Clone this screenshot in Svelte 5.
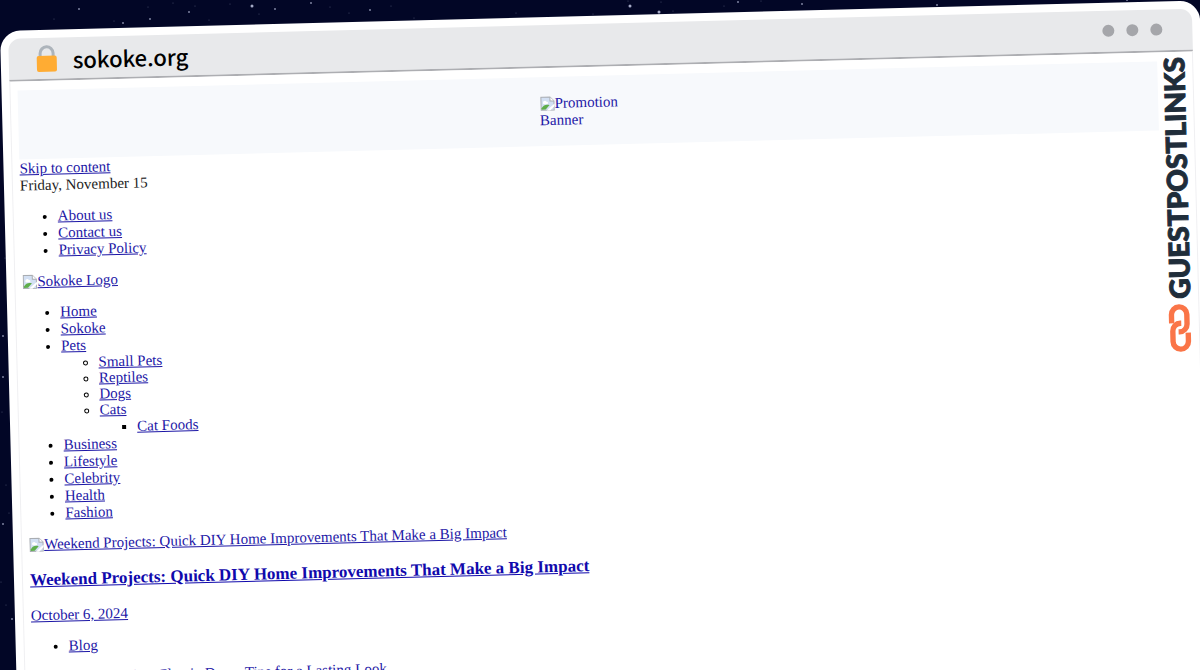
<script>
  const stars = [
    [54, 19, 1], [79, 9, 2], [114, 21, 1], [123, 23, 2], [150, 19, 2], [148, 7, 1], [173, 3, 1], [189, 12, 2],
    [195, 6, 1], [209, 20, 1], [230, 4, 1], [252, 6, 3], [259, 14, 1], [275, 9, 2], [311, 3, 2], [330, 7, 1],
    [349, 13, 1], [370, 10, 2], [391, 6, 1], [414, 18, 1], [516, 13, 1], [630, 6, 3], [593, 14, 1], [659, 12, 3],
    [628, 1, 1], [673, 11, 1], [661, 2, 1], [724, 6, 1], [738, 2, 2], [761, 1, 1], [802, 4, 2], [937, 5, 2],
    [1127, 0, 2], [5, 258, 1], [3, 336, 2], [3, 377, 2], [2, 412, 1], [6, 485, 1], [9, 513, 1], [3, 524, 2],
    [1, 582, 1], [6, 605, 1], [12, 619, 2], [1198, 60, 1]
  ];

  const pages = ['About us', 'Contact us', 'Privacy Policy'];

  const menu = [
    { label: 'Home' },
    { label: 'Sokoke' },
    {
      label: 'Pets',
      items: [
        { label: 'Small Pets' },
        { label: 'Reptiles' },
        { label: 'Dogs' },
        { label: 'Cats', items: [{ label: 'Cat Foods' }] }
      ]
    },
    { label: 'Business' },
    { label: 'Lifestyle' },
    { label: 'Celebrity' },
    { label: 'Health' },
    { label: 'Fashion' }
  ];
</script>

{#snippet missing()}
  <svg class="missing" viewBox="0 0 15 15" aria-hidden="true">
    <path d="M1 1h9l4 4v9H1z" fill="#d3e0f3" stroke="#a9adb2" />
    <path d="M10 1v4h4" fill="#fff" stroke="#a9adb2" />
    <path d="M3 6.500c0-2 3-2.500 3.500-.8C8.500 5.500 8.500 8 7 8H4C3 8 3 7 3 6.500z" fill="#fff" />
    <path d="M1.500 13.500V12c2-3.500 5-4 8-3l-4 4.500z" fill="#5fae4b" />
    <path d="M6.500 14.500l8-7v2.500l-4.500 4.500z" fill="#fff" />
  </svg>
{/snippet}

{#snippet tree(items)}
  <ul>
    {#each items as item}
      <li>
        <a href="#top">{item.label}</a>
        {#if item.items}{@render tree(item.items)}{/if}
      </li>
    {/each}
  </ul>
{/snippet}

<div class="sky">
  <svg class="stars" aria-hidden="true">
    {#each stars as [x, y, size]}
      <circle cx={x} cy={y} r={size / 2} opacity={0.2 + size * 0.18} />
    {/each}
  </svg>

  <div class="window" id="top">
    <header class="bar">
      <svg class="lock" viewBox="0 0 22 28" aria-hidden="true">
        <path d="M4.500 13V8.500a6.500 6.500 0 0 1 13 0V13" fill="none" stroke="#adb4bb" stroke-width="3" />
        <rect x="1" y="11" width="20" height="16" rx="2" fill="#ffac33" />
      </svg>
      <span class="host">sokoke.org</span>
      <span class="dots"><i></i><i></i><i></i></span>
    </header>

    <main class="page">
      <div class="banner">
        <a href="#top">{@render missing()}Promotion Banner</a>
      </div>
      <a href="#top">Skip to content</a>
      <div>Friday, November 15</div>
      <ul>
        {#each pages as label}
          <li><a href="#top">{label}</a></li>
        {/each}
      </ul>
      <a href="#top">{@render missing()}Sokoke Logo</a>
      <nav>{@render tree(menu)}</nav>
      <article>
        <a href="#top">{@render missing()}Weekend Projects: Quick DIY Home Improvements That Make a Big Impact</a>
        <h3><a href="#top">Weekend Projects: Quick DIY Home Improvements That Make a Big Impact</a></h3>
        <a href="#top">October 6, 2024</a>
        <ul><li><a href="#top">Blog</a></li></ul>
      </article>
      <article>
        <a href="#top">{@render missing()}Timeless Interior: Classic Decor Tips for a Lasting Look</a>
      </article>
    </main>

    <aside class="brand">
      <span class="name">GUESTPOSTLINKS</span>
      <svg class="chain" viewBox="0 0 24 50" aria-hidden="true">
        <g fill="none" stroke="#fa7548" stroke-width="5.600">
          <path d="M3.500 20V11a8 8 0 0 1 16 0V21a8 8 0 0 1-8 8h-1" />
          <path d="M20.500 30v9a8 8 0 0 1-16 0V28a8 8 0 0 1 8-8h1" />
        </g>
      </svg>
    </aside>
  </div>
</div>

<style>
  :global(body) {
    background: #020626;
  }

  .sky {
    position: relative;
    display: flow-root;
    box-sizing: border-box;
    height: 100vh;
    overflow: hidden;
    background: #020626;
  }

  .stars {
    position: absolute;
    top: 0;
    left: 0;
    width: 100%;
    height: 100%;
    fill: #dfe4ff;
  }

  .window {
    position: relative;
    box-sizing: border-box;
    min-height: 110vh;
    margin-top: 31px;
    padding: 8px;
    border-radius: 20px;
    background: #fff;
    transform: rotate(-1.46deg);
    transform-origin: 0 0;
  }

  .bar {
    display: flex;
    align-items: center;
    height: 41px;
    padding: 0 30px 0 27px;
    border-bottom: 2px solid #adaeb2;
    border-radius: 12px 12px 0 0;
    background: #e8e9eb;
  }

  .lock {
    width: 22px;
    height: 28px;
  }

  .host {
    margin-left: 15px;
    font: 500 22px/36px "Noto Sans CJK SC", sans-serif;
    color: #000;
  }

  .dots {
    display: flex;
    gap: 12px;
    margin-left: auto;
    padding-bottom: 2px;
  }

  .dots i {
    width: 12px;
    height: 12px;
    border-radius: 50%;
    background: #a5a6aa;
  }

  .page {
    padding: 9px 8px 8px 7px;
    border-left: 1px solid #f0f0f2;
    border-right: 1px solid #f0f0f2;
    font: 15px/17px "Liberation Serif", serif;
    color: #222;
  }

  a {
    color: #1d17a6;
  }

  .banner {
    display: flex;
    justify-content: center;
    height: 69px;
    margin-bottom: 1px;
    padding-right: 32px;
    background: #f7f9fc;
  }

  .banner a {
    width: 92px;
    margin-top: 18px;
    text-decoration: none;
  }

  .missing {
    width: 15px;
    height: 15px;
    vertical-align: -3px;
  }

  ul {
    margin: 14px 0;
    padding-left: 37px;
  }

  li::marker {
    color: #000;
  }

  ul ul {
    margin: 0;
    line-height: 16px;
  }

  ul ul ul {
    margin: 1px 0;
  }

  h3 {
    margin: 17px 0;
    font-size: 17px;
    line-height: 20px;
  }

  h3 a {
    color: #1009ac;
  }

  .brand {
    position: absolute;
    top: 56px;
    right: 12px;
    display: flex;
    flex-direction: column;
    align-items: center;
    gap: 5px;
    width: 32px;
    background: #fff;
  }

  .name {
    writing-mode: vertical-rl;
    transform: rotate(180deg);
    font: 900 28px/32px Lato, sans-serif;
    color: #1f2d3a;
    -webkit-text-stroke: 1px #1f2d3a;
  }

  .chain {
    width: 24px;
    height: 48px;
  }
</style>
